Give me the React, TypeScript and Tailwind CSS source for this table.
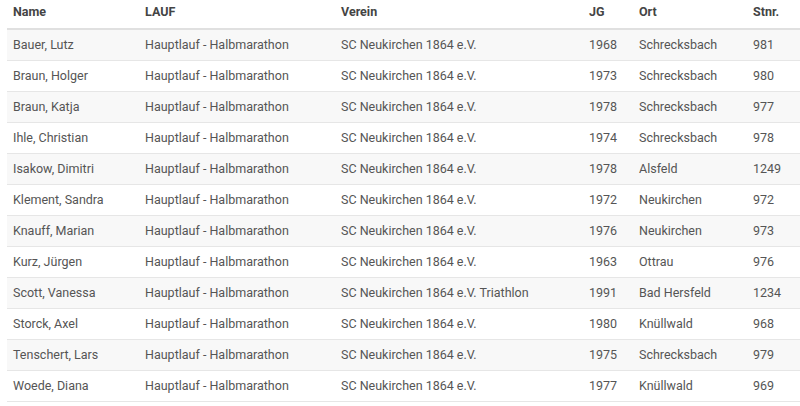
import React from "react";

const rows = [
  ["Bauer, Lutz", "Hauptlauf - Halbmarathon", "SC Neukirchen 1864 e.V.", "1968", "Schrecksbach", "981"],
  ["Braun, Holger", "Hauptlauf - Halbmarathon", "SC Neukirchen 1864 e.V.", "1973", "Schrecksbach", "980"],
  ["Braun, Katja", "Hauptlauf - Halbmarathon", "SC Neukirchen 1864 e.V.", "1978", "Schrecksbach", "977"],
  ["Ihle, Christian", "Hauptlauf - Halbmarathon", "SC Neukirchen 1864 e.V.", "1974", "Schrecksbach", "978"],
  ["Isakow, Dimitri", "Hauptlauf - Halbmarathon", "SC Neukirchen 1864 e.V.", "1978", "Alsfeld", "1249"],
  ["Klement, Sandra", "Hauptlauf - Halbmarathon", "SC Neukirchen 1864 e.V.", "1972", "Neukirchen", "972"],
  ["Knauff, Marian", "Hauptlauf - Halbmarathon", "SC Neukirchen 1864 e.V.", "1976", "Neukirchen", "973"],
  ["Kurz, Jürgen", "Hauptlauf - Halbmarathon", "SC Neukirchen 1864 e.V.", "1963", "Ottrau", "976"],
  ["Scott, Vanessa", "Hauptlauf - Halbmarathon", "SC Neukirchen 1864 e.V. Triathlon", "1991", "Bad Hersfeld", "1234"],
  ["Storck, Axel", "Hauptlauf - Halbmarathon", "SC Neukirchen 1864 e.V.", "1980", "Knüllwald", "968"],
  ["Tenschert, Lars", "Hauptlauf - Halbmarathon", "SC Neukirchen 1864 e.V.", "1975", "Schrecksbach", "979"],
  ["Woede, Diana", "Hauptlauf - Halbmarathon", "SC Neukirchen 1864 e.V.", "1977", "Knüllwald", "969"],
];

const headers = ["Name", "LAUF", "Verein", "JG", "Ort", "Stnr."];
const widths = ["w-[132px]", "w-[196px]", "w-[248px]", "w-[50px]", "w-[114px]", "w-[53px]"];

export default function App() {
  return (
    <div className="w-[800px] h-[406px] bg-white pl-[7px] overflow-hidden" style={{ fontFamily: '"Roboto", "Liberation Sans", sans-serif' }}>
      <table className="w-[793px] table-fixed border-collapse text-[12.5px] text-[#555]">
        <thead>
          <tr className="h-[29px] border-b-2 border-[#e0e0e0]">
            {headers.map((h, i) => (
              <th key={h} className={`${widths[i]} pl-[6px] text-left font-bold text-[#444] align-middle pb-[4px]`}>
                {h}
              </th>
            ))}
          </tr>
        </thead>
        <tbody>
          {rows.map((r, ri) => (
            <tr key={ri} className={`h-[31px] border-b border-[#e6e6e6] ${ri % 2 === 0 ? "bg-[#f8f8f8]" : "bg-white"}`}>
              {r.map((c, ci) => (
                <td key={ci} className="pl-[6px] pt-[2px] align-middle whitespace-nowrap">
                  {c}
                </td>
              ))}
            </tr>
          ))}
        </tbody>
      </table>
    </div>
  );
}
